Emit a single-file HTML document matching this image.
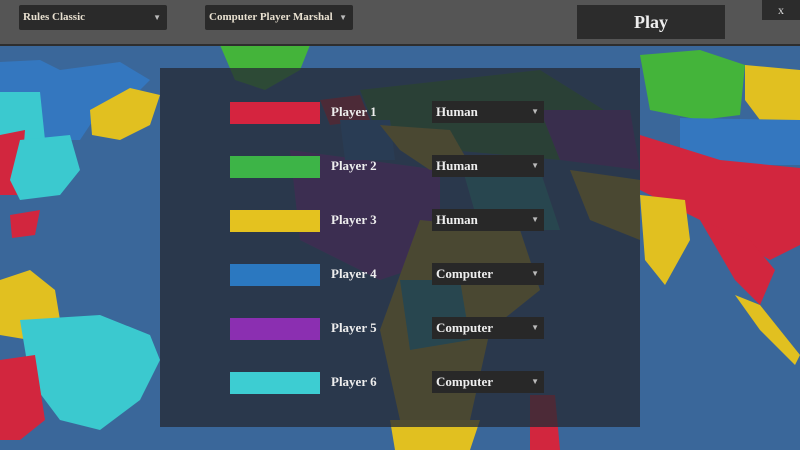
<!DOCTYPE html>
<html><head><style>
body{margin:0;width:800px;height:450px;overflow:hidden;position:relative;font-family:"Liberation Serif",serif;background:#3a679a}
svg{position:absolute;left:0;top:0}
.top{position:absolute;left:0;top:0;width:800px;height:44px;background:#555;border-bottom:2px solid #2e2e2e}
.dd{position:absolute;height:25px;background:#2a2a2a;border-radius:2px;color:#e8e0d0;font-weight:bold;font-size:11px;line-height:25px;padding-left:4px;box-sizing:border-box}
.dd b{position:absolute;right:6px;top:0;font-size:8px;color:#bbb}
.play{position:absolute;left:577px;top:5px;width:148px;height:34px;background:#2c2c2c;color:#eee;font-weight:bold;font-size:18px;text-align:center;line-height:34px}
.x{position:absolute;left:762px;top:0;width:38px;height:20px;background:#2c2c2c;color:#ddd;text-align:center;font-size:12px;line-height:20px}
.panel{position:absolute;left:160px;top:68px;width:480px;height:359px;background:rgba(38,43,54,0.78)}
.sw{position:absolute;left:70px;width:90px;height:22px}
.pl{position:absolute;left:171px;color:#eee;font-weight:bold;font-size:13px}
.sel{position:absolute;left:272px;width:112px;height:22px;background:#282828;color:#eee;font-weight:bold;font-size:13px;line-height:22px;padding-left:4px;box-sizing:border-box}
.sel b{position:absolute;right:5px;top:0;font-size:8px;color:#bbb}
</style></head><body>
<svg width="800" height="450">
<rect width="800" height="450" fill="#3a679a"/>
<polygon points="0,62 40,60 60,70 120,62 150,80 130,100 100,110 80,140 40,140 20,100 0,95" fill="#3477bf"/>
<polygon points="0,92 40,92 45,140 0,145" fill="#3bc9cf"/>
<polygon points="0,135 25,130 20,195 0,195" fill="#d2263e"/>
<polygon points="20,140 70,135 80,170 60,195 20,200 10,180" fill="#3bc9cf"/>
<polygon points="90,110 130,88 160,95 150,125 120,140 92,135" fill="#e1c020"/>
<polygon points="10,215 40,210 35,235 12,238" fill="#d2263e"/>
<polygon points="220,45 310,45 300,70 265,90 235,80" fill="#44b43a"/>
<polygon points="0,280 30,270 55,290 60,320 30,340 0,335" fill="#e1c020"/>
<polygon points="20,320 100,315 150,335 160,360 140,400 100,430 60,420 30,380" fill="#3bc9cf"/>
<polygon points="0,360 35,355 45,420 20,440 0,440" fill="#d2263e"/>
<polygon points="640,55 700,50 745,65 740,115 700,120 650,110" fill="#44b43a"/>
<polygon points="745,65 800,70 800,120 760,120 745,100" fill="#e1c020"/>
<polygon points="680,118 800,120 800,165 720,165 680,150" fill="#3477bf"/>
<polygon points="640,135 720,160 800,168 800,245 770,260 700,220 660,200 640,190" fill="#d2263e"/>
<polygon points="640,195 685,200 690,240 665,285 645,260" fill="#e1c020"/>
<polygon points="700,220 750,240 775,270 760,305 735,280" fill="#d2263e"/>
<polygon points="735,295 760,305 800,355 795,365 760,330" fill="#e1c020"/>
<polygon points="390,420 480,420 470,450 395,450" fill="#e1c020"/>
<polygon points="530,395 555,395 560,450 530,450" fill="#d2263e"/>
<polygon points="290,150 440,170 440,260 380,280 300,240" fill="#8a3ab0"/>
<polygon points="420,220 520,230 540,290 490,330 470,420 400,420 380,330" fill="#c9ac25"/>
<polygon points="400,280 460,280 470,340 410,350" fill="#2fa6a8"/>
<polygon points="360,90 540,70 620,120 560,160 450,150 380,140" fill="#3a8a3a"/>
<polygon points="460,160 540,170 560,230 480,230" fill="#2fa6a8"/>
<polygon points="570,170 640,180 640,240 590,220" fill="#c9ac25"/>
<polygon points="540,110 630,110 640,170 560,160" fill="#7a3aa0"/>
<polygon points="320,100 360,95 370,120 330,125" fill="#d2263e"/>
<polygon points="340,120 390,120 395,160 345,160" fill="#3477bf"/>
<polygon points="380,125 450,130 470,165 430,170 400,150" fill="#c9ac25"/>
</svg>
<div class="top">
<div class="dd" style="left:19px;top:5px;width:148px">Rules Classic<b>▼</b></div>
<div class="dd" style="left:205px;top:5px;width:148px">Computer Player Marshal<b>▼</b></div>
<div class="play">Play</div>
<div class="x">x</div>
</div>
<div class="panel">
<div class="sw" style="top:34px;background:#d5243f"></div><div class="pl" style="top:36px">Player 1</div><div class="sel" style="top:33px">Human<b>▼</b></div>
<div class="sw" style="top:88px;background:#3db447"></div><div class="pl" style="top:90px">Player 2</div><div class="sel" style="top:87px">Human<b>▼</b></div>
<div class="sw" style="top:142px;background:#e4c21f"></div><div class="pl" style="top:144px">Player 3</div><div class="sel" style="top:141px">Human<b>▼</b></div>
<div class="sw" style="top:196px;background:#2b78c0"></div><div class="pl" style="top:198px">Player 4</div><div class="sel" style="top:195px">Computer<b>▼</b></div>
<div class="sw" style="top:250px;background:#8b2fb1"></div><div class="pl" style="top:252px">Player 5</div><div class="sel" style="top:249px">Computer<b>▼</b></div>
<div class="sw" style="top:304px;background:#3dcdd2"></div><div class="pl" style="top:306px">Player 6</div><div class="sel" style="top:303px">Computer<b>▼</b></div>
</div>
</body></html>
